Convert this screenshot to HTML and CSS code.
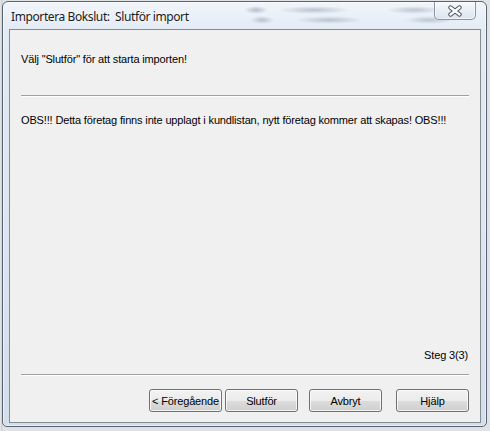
FILE: index.html
```html
<!DOCTYPE html>
<html lang="sv">
<head>
<meta charset="utf-8">
<title>Importera Bokslut</title>
<link rel="stylesheet" href="styles.css">
</head>
<body>
<div class="window">
  <div class="titlebar">
    <span class="title">Importera Bokslut:&nbsp; Slutför import</span>
    <div class="close">
      <svg width="16" height="12" viewBox="0 0 16 12">
        <path d="M3.5 2.5 L12.5 9.5 M12.5 2.5 L3.5 9.5" stroke="#4a5563" stroke-width="4.4" stroke-linecap="round"/>
        <path d="M3.5 2.5 L12.5 9.5 M12.5 2.5 L3.5 9.5" stroke="#ffffff" stroke-width="2.4" stroke-linecap="round"/>
      </svg>
    </div>
  </div>
  <div class="client">
    <p class="msg first">Välj "Slutför" för att starta importen!</p>
    <div class="sep top-sep"></div>
    <p class="msg obs">OBS!!! Detta företag finns inte upplagt i kundlistan, nytt företag kommer att skapas! OBS!!!</p>
    <div class="spacer"></div>
    <p class="msg step">Steg 3(3)</p>
    <div class="sep bottom-sep"></div>
    <div class="buttons">
      <button class="btn prev">&lt; Föregående</button>
      <button class="btn finish">Slutför</button>
      <button class="btn cancel">Avbryt</button>
      <button class="btn help">Hjälp</button>
    </div>
  </div>
</div>
</body>
</html>
```
FILE: styles.css
```css
html, body {
  margin: 0;
  padding: 0;
}
body {
  width: 490px;
  height: 431px;
  overflow: hidden;
  background: linear-gradient(90deg, #e9ecef 0, #c9ccd0 2px, #dfe2e6 3px);
  font-family: "Liberation Sans", Arial, sans-serif;
}
.window {
  box-sizing: border-box;
  position: relative;
  width: 485px;
  height: 426px;
  margin: 1px 0 0 2px;
  padding: 0 5px 3px 6px;
  border: 1px solid #59626e;
  border-radius: 6px 6px 5px 5px;
  background:
    linear-gradient(180deg, rgba(255,255,255,0.35), rgba(255,255,255,0) 28px),
    linear-gradient(180deg, #eaf0f8 0, #e2eaf4 30px, #dde6f1 200px, #d3deeb 100%);
  box-shadow: inset 0 0 0 1px rgba(255,255,255,0.55);
  display: flex;
  flex-direction: column;
  overflow: hidden;
}
.titlebar {
  position: relative;
  height: 27px;
  flex: none;
  display: flex;
  align-items: center;
  padding-left: 2px;
}
.titlebar::before {
  content: "";
  position: absolute;
  left: 225px;
  top: 3px;
  width: 240px;
  height: 20px;
  background:
    radial-gradient(ellipse 12px 4px at 22px 5px, rgba(110,125,150,0.45), transparent),
    radial-gradient(ellipse 36px 4px at 80px 5px, rgba(110,125,150,0.40), transparent),
    radial-gradient(ellipse 28px 4px at 180px 5px, rgba(110,125,150,0.38), transparent),
    radial-gradient(ellipse 12px 4px at 28px 15px, rgba(110,125,150,0.40), transparent),
    radial-gradient(ellipse 34px 4px at 95px 15px, rgba(110,125,150,0.38), transparent),
    radial-gradient(ellipse 24px 4px at 195px 15px, rgba(110,125,150,0.36), transparent);
}
.title {
  position: relative;
  font-family: "Noto Sans", "Open Sans", sans-serif;
  font-size: 12px;
  line-height: 16px;
  letter-spacing: -0.4px;
  color: #1c1c1c;
  margin-top: 2px;
  text-shadow: 0 0 6px rgba(255,255,255,0.9);
}
.close {
  position: absolute;
  top: -1px;
  right: 5px;
  width: 42px;
  height: 19px;
  box-sizing: border-box;
  border: 1px solid #8a939f;
  border-top: none;
  border-radius: 0 0 5px 5px;
  background: linear-gradient(180deg, rgba(255,255,255,0.55), rgba(230,236,244,0.5) 50%, rgba(210,220,232,0.55));
  box-shadow: inset 0 0 0 1px rgba(255,255,255,0.6);
  display: flex;
  align-items: center;
  justify-content: center;
}
.close svg {
  display: block;
  margin-top: 1px;
}
.client {
  flex: 1;
  box-sizing: border-box;
  border: 1px solid #868b92;
  background: #f0f0f0;
  display: flex;
  flex-direction: column;
  padding: 0 11px;
}
.msg {
  margin: 0;
  font-size: 11px;
  line-height: 13px;
  letter-spacing: -0.15px;
  color: #000;
  white-space: nowrap;
}
.first {
  margin-top: 23px;
}
.sep {
  height: 0;
  border-top: 1px solid #a0a0a0;
  border-bottom: 1px solid #ffffff;
}
.top-sep {
  margin-top: 29px;
}
.obs {
  margin-top: 17px;
}
.spacer {
  flex: 1;
}
.step {
  text-align: right;
  padding-right: 1px;
  margin-bottom: 12px;
}
.bottom-sep {
  margin-bottom: 13px;
}
.buttons {
  display: flex;
  justify-content: flex-end;
  margin-bottom: 10px;
}
.btn {
  box-sizing: border-box;
  width: 73px;
  height: 23px;
  padding: 0;
  border: 1px solid #707070;
  border-radius: 3px;
  background: linear-gradient(180deg, #f2f2f2 0, #ebebeb 50%, #dddddd 51%, #cfcfcf 100%);
  box-shadow: inset 0 0 0 1px rgba(255,255,255,0.75);
  font-family: "Liberation Sans", Arial, sans-serif;
  font-size: 11px;
  font-weight: normal;
  letter-spacing: -0.15px;
  color: #000;
}
.finish {
  margin-left: 3px;
}
.cancel {
  margin-left: 11px;
}
.help {
  margin-left: 14px;
}
```
